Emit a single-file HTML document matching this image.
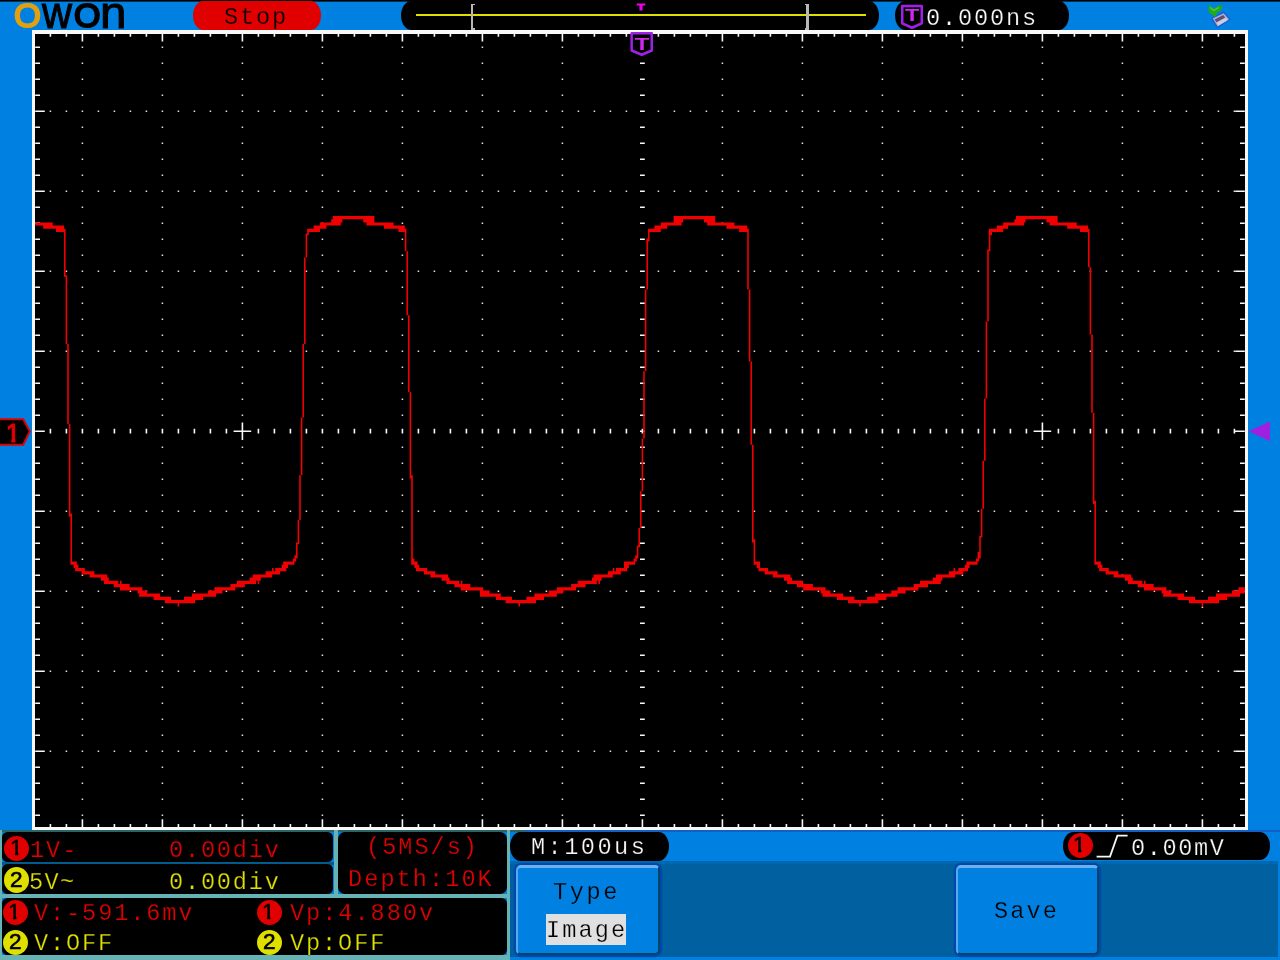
<!DOCTYPE html>
<html lang="en">
<head>
<meta charset="utf-8">
<title>OWON oscilloscope</title>
<style>
html,body{margin:0;padding:0;}
body{width:1280px;height:960px;overflow:hidden;background:#0080e0;position:relative;
 font-family:"Liberation Mono",monospace;}
.abs{position:absolute;}
.blk{position:absolute;background:#000;}
.t{position:absolute;will-change:transform;white-space:pre;line-height:1;font-family:"Liberation Mono",monospace;font-size:24px;}
.s{position:absolute;will-change:transform;white-space:pre;line-height:1;font-family:"Liberation Sans",sans-serif;}
.red{color:#e00000;-webkit-text-stroke:0.25px #000;} .yel{color:#e0e000;-webkit-text-stroke:0.25px #000;} .wht{color:#f8f8f8;-webkit-text-stroke:0.25px #000;} .bk{color:#000;}
.circ{position:absolute;width:25px;height:25px;border-radius:50%;}
.circ span{position:absolute;left:0;top:0;width:25px;text-align:center;line-height:25px;
 font-family:"Liberation Sans",sans-serif;font-size:24px;color:#000;}
.btn{position:absolute;background:#0080e0;border-radius:5px;box-sizing:border-box;
 border-top:3px solid #6cb0ec;border-left:2px solid #58a8ea;border-right:2.2px solid #004468;border-bottom:2.2px solid #004468;box-shadow:0 0 0 2.2px #0048ac;}
</style>
</head>
<body>

<div class="abs" style="left:0;top:0;width:1280px;height:2px;background:linear-gradient(#000 0 1px,#00335a 1px 2px)"></div>
<div class="abs" style="left:32px;top:30.4px;width:1216px;height:800px;background:#f8f8f8"></div>
<div class="blk" style="left:35.2px;top:33.6px;width:1209.6px;height:793.6px"></div>
<svg class="abs" style="left:0;top:0" width="1280" height="960" viewBox="0 0 800 600">
<path fill="#d8d8d8" d="M51 29h1v1h-1zM51 39h1v1h-1zM51 49h1v1h-1zM51 59h1v1h-1zM51 69h1v1h-1zM51 79h1v1h-1zM51 89h1v1h-1zM51 99h1v1h-1zM51 109h1v1h-1zM51 119h1v1h-1zM51 129h1v1h-1zM51 139h1v1h-1zM51 149h1v1h-1zM51 159h1v1h-1zM51 169h1v1h-1zM51 179h1v1h-1zM51 189h1v1h-1zM51 199h1v1h-1zM51 209h1v1h-1zM51 219h1v1h-1zM51 229h1v1h-1zM51 239h1v1h-1zM51 249h1v1h-1zM51 259h1v1h-1zM51 279h1v1h-1zM51 289h1v1h-1zM51 299h1v1h-1zM51 309h1v1h-1zM51 319h1v1h-1zM51 329h1v1h-1zM51 339h1v1h-1zM51 349h1v1h-1zM51 359h1v1h-1zM51 369h1v1h-1zM51 379h1v1h-1zM51 389h1v1h-1zM51 399h1v1h-1zM51 409h1v1h-1zM51 419h1v1h-1zM51 429h1v1h-1zM51 439h1v1h-1zM51 449h1v1h-1zM51 459h1v1h-1zM51 469h1v1h-1zM51 479h1v1h-1zM51 489h1v1h-1zM51 499h1v1h-1zM51 509h1v1h-1zM101 29h1v1h-1zM101 39h1v1h-1zM101 49h1v1h-1zM101 59h1v1h-1zM101 69h1v1h-1zM101 79h1v1h-1zM101 89h1v1h-1zM101 99h1v1h-1zM101 109h1v1h-1zM101 119h1v1h-1zM101 129h1v1h-1zM101 139h1v1h-1zM101 149h1v1h-1zM101 159h1v1h-1zM101 169h1v1h-1zM101 179h1v1h-1zM101 189h1v1h-1zM101 199h1v1h-1zM101 209h1v1h-1zM101 219h1v1h-1zM101 229h1v1h-1zM101 239h1v1h-1zM101 249h1v1h-1zM101 259h1v1h-1zM101 279h1v1h-1zM101 289h1v1h-1zM101 299h1v1h-1zM101 309h1v1h-1zM101 319h1v1h-1zM101 329h1v1h-1zM101 339h1v1h-1zM101 349h1v1h-1zM101 359h1v1h-1zM101 369h1v1h-1zM101 379h1v1h-1zM101 389h1v1h-1zM101 399h1v1h-1zM101 409h1v1h-1zM101 419h1v1h-1zM101 429h1v1h-1zM101 439h1v1h-1zM101 449h1v1h-1zM101 459h1v1h-1zM101 469h1v1h-1zM101 479h1v1h-1zM101 489h1v1h-1zM101 499h1v1h-1zM101 509h1v1h-1zM151 29h1v1h-1zM151 39h1v1h-1zM151 49h1v1h-1zM151 59h1v1h-1zM151 69h1v1h-1zM151 79h1v1h-1zM151 89h1v1h-1zM151 99h1v1h-1zM151 109h1v1h-1zM151 119h1v1h-1zM151 129h1v1h-1zM151 139h1v1h-1zM151 149h1v1h-1zM151 159h1v1h-1zM151 169h1v1h-1zM151 179h1v1h-1zM151 189h1v1h-1zM151 199h1v1h-1zM151 209h1v1h-1zM151 219h1v1h-1zM151 229h1v1h-1zM151 239h1v1h-1zM151 249h1v1h-1zM151 259h1v1h-1zM151 279h1v1h-1zM151 289h1v1h-1zM151 299h1v1h-1zM151 309h1v1h-1zM151 319h1v1h-1zM151 329h1v1h-1zM151 339h1v1h-1zM151 349h1v1h-1zM151 359h1v1h-1zM151 369h1v1h-1zM151 379h1v1h-1zM151 389h1v1h-1zM151 399h1v1h-1zM151 409h1v1h-1zM151 419h1v1h-1zM151 429h1v1h-1zM151 439h1v1h-1zM151 449h1v1h-1zM151 459h1v1h-1zM151 469h1v1h-1zM151 479h1v1h-1zM151 489h1v1h-1zM151 499h1v1h-1zM151 509h1v1h-1zM201 29h1v1h-1zM201 39h1v1h-1zM201 49h1v1h-1zM201 59h1v1h-1zM201 69h1v1h-1zM201 79h1v1h-1zM201 89h1v1h-1zM201 99h1v1h-1zM201 109h1v1h-1zM201 119h1v1h-1zM201 129h1v1h-1zM201 139h1v1h-1zM201 149h1v1h-1zM201 159h1v1h-1zM201 169h1v1h-1zM201 179h1v1h-1zM201 189h1v1h-1zM201 199h1v1h-1zM201 209h1v1h-1zM201 219h1v1h-1zM201 229h1v1h-1zM201 239h1v1h-1zM201 249h1v1h-1zM201 259h1v1h-1zM201 279h1v1h-1zM201 289h1v1h-1zM201 299h1v1h-1zM201 309h1v1h-1zM201 319h1v1h-1zM201 329h1v1h-1zM201 339h1v1h-1zM201 349h1v1h-1zM201 359h1v1h-1zM201 369h1v1h-1zM201 379h1v1h-1zM201 389h1v1h-1zM201 399h1v1h-1zM201 409h1v1h-1zM201 419h1v1h-1zM201 429h1v1h-1zM201 439h1v1h-1zM201 449h1v1h-1zM201 459h1v1h-1zM201 469h1v1h-1zM201 479h1v1h-1zM201 489h1v1h-1zM201 499h1v1h-1zM201 509h1v1h-1zM251 29h1v1h-1zM251 39h1v1h-1zM251 49h1v1h-1zM251 59h1v1h-1zM251 69h1v1h-1zM251 79h1v1h-1zM251 89h1v1h-1zM251 99h1v1h-1zM251 109h1v1h-1zM251 119h1v1h-1zM251 129h1v1h-1zM251 139h1v1h-1zM251 149h1v1h-1zM251 159h1v1h-1zM251 169h1v1h-1zM251 179h1v1h-1zM251 189h1v1h-1zM251 199h1v1h-1zM251 209h1v1h-1zM251 219h1v1h-1zM251 229h1v1h-1zM251 239h1v1h-1zM251 249h1v1h-1zM251 259h1v1h-1zM251 279h1v1h-1zM251 289h1v1h-1zM251 299h1v1h-1zM251 309h1v1h-1zM251 319h1v1h-1zM251 329h1v1h-1zM251 339h1v1h-1zM251 349h1v1h-1zM251 359h1v1h-1zM251 369h1v1h-1zM251 379h1v1h-1zM251 389h1v1h-1zM251 399h1v1h-1zM251 409h1v1h-1zM251 419h1v1h-1zM251 429h1v1h-1zM251 439h1v1h-1zM251 449h1v1h-1zM251 459h1v1h-1zM251 469h1v1h-1zM251 479h1v1h-1zM251 489h1v1h-1zM251 499h1v1h-1zM251 509h1v1h-1zM301 29h1v1h-1zM301 39h1v1h-1zM301 49h1v1h-1zM301 59h1v1h-1zM301 69h1v1h-1zM301 79h1v1h-1zM301 89h1v1h-1zM301 99h1v1h-1zM301 109h1v1h-1zM301 119h1v1h-1zM301 129h1v1h-1zM301 139h1v1h-1zM301 149h1v1h-1zM301 159h1v1h-1zM301 169h1v1h-1zM301 179h1v1h-1zM301 189h1v1h-1zM301 199h1v1h-1zM301 209h1v1h-1zM301 219h1v1h-1zM301 229h1v1h-1zM301 239h1v1h-1zM301 249h1v1h-1zM301 259h1v1h-1zM301 279h1v1h-1zM301 289h1v1h-1zM301 299h1v1h-1zM301 309h1v1h-1zM301 319h1v1h-1zM301 329h1v1h-1zM301 339h1v1h-1zM301 349h1v1h-1zM301 359h1v1h-1zM301 369h1v1h-1zM301 379h1v1h-1zM301 389h1v1h-1zM301 399h1v1h-1zM301 409h1v1h-1zM301 419h1v1h-1zM301 429h1v1h-1zM301 439h1v1h-1zM301 449h1v1h-1zM301 459h1v1h-1zM301 469h1v1h-1zM301 479h1v1h-1zM301 489h1v1h-1zM301 499h1v1h-1zM301 509h1v1h-1zM351 29h1v1h-1zM351 39h1v1h-1zM351 49h1v1h-1zM351 59h1v1h-1zM351 69h1v1h-1zM351 79h1v1h-1zM351 89h1v1h-1zM351 99h1v1h-1zM351 109h1v1h-1zM351 119h1v1h-1zM351 129h1v1h-1zM351 139h1v1h-1zM351 149h1v1h-1zM351 159h1v1h-1zM351 169h1v1h-1zM351 179h1v1h-1zM351 189h1v1h-1zM351 199h1v1h-1zM351 209h1v1h-1zM351 219h1v1h-1zM351 229h1v1h-1zM351 239h1v1h-1zM351 249h1v1h-1zM351 259h1v1h-1zM351 279h1v1h-1zM351 289h1v1h-1zM351 299h1v1h-1zM351 309h1v1h-1zM351 319h1v1h-1zM351 329h1v1h-1zM351 339h1v1h-1zM351 349h1v1h-1zM351 359h1v1h-1zM351 369h1v1h-1zM351 379h1v1h-1zM351 389h1v1h-1zM351 399h1v1h-1zM351 409h1v1h-1zM351 419h1v1h-1zM351 429h1v1h-1zM351 439h1v1h-1zM351 449h1v1h-1zM351 459h1v1h-1zM351 469h1v1h-1zM351 479h1v1h-1zM351 489h1v1h-1zM351 499h1v1h-1zM351 509h1v1h-1zM451 29h1v1h-1zM451 39h1v1h-1zM451 49h1v1h-1zM451 59h1v1h-1zM451 69h1v1h-1zM451 79h1v1h-1zM451 89h1v1h-1zM451 99h1v1h-1zM451 109h1v1h-1zM451 119h1v1h-1zM451 129h1v1h-1zM451 139h1v1h-1zM451 149h1v1h-1zM451 159h1v1h-1zM451 169h1v1h-1zM451 179h1v1h-1zM451 189h1v1h-1zM451 199h1v1h-1zM451 209h1v1h-1zM451 219h1v1h-1zM451 229h1v1h-1zM451 239h1v1h-1zM451 249h1v1h-1zM451 259h1v1h-1zM451 279h1v1h-1zM451 289h1v1h-1zM451 299h1v1h-1zM451 309h1v1h-1zM451 319h1v1h-1zM451 329h1v1h-1zM451 339h1v1h-1zM451 349h1v1h-1zM451 359h1v1h-1zM451 369h1v1h-1zM451 379h1v1h-1zM451 389h1v1h-1zM451 399h1v1h-1zM451 409h1v1h-1zM451 419h1v1h-1zM451 429h1v1h-1zM451 439h1v1h-1zM451 449h1v1h-1zM451 459h1v1h-1zM451 469h1v1h-1zM451 479h1v1h-1zM451 489h1v1h-1zM451 499h1v1h-1zM451 509h1v1h-1zM501 29h1v1h-1zM501 39h1v1h-1zM501 49h1v1h-1zM501 59h1v1h-1zM501 69h1v1h-1zM501 79h1v1h-1zM501 89h1v1h-1zM501 99h1v1h-1zM501 109h1v1h-1zM501 119h1v1h-1zM501 129h1v1h-1zM501 139h1v1h-1zM501 149h1v1h-1zM501 159h1v1h-1zM501 169h1v1h-1zM501 179h1v1h-1zM501 189h1v1h-1zM501 199h1v1h-1zM501 209h1v1h-1zM501 219h1v1h-1zM501 229h1v1h-1zM501 239h1v1h-1zM501 249h1v1h-1zM501 259h1v1h-1zM501 279h1v1h-1zM501 289h1v1h-1zM501 299h1v1h-1zM501 309h1v1h-1zM501 319h1v1h-1zM501 329h1v1h-1zM501 339h1v1h-1zM501 349h1v1h-1zM501 359h1v1h-1zM501 369h1v1h-1zM501 379h1v1h-1zM501 389h1v1h-1zM501 399h1v1h-1zM501 409h1v1h-1zM501 419h1v1h-1zM501 429h1v1h-1zM501 439h1v1h-1zM501 449h1v1h-1zM501 459h1v1h-1zM501 469h1v1h-1zM501 479h1v1h-1zM501 489h1v1h-1zM501 499h1v1h-1zM501 509h1v1h-1zM551 29h1v1h-1zM551 39h1v1h-1zM551 49h1v1h-1zM551 59h1v1h-1zM551 69h1v1h-1zM551 79h1v1h-1zM551 89h1v1h-1zM551 99h1v1h-1zM551 109h1v1h-1zM551 119h1v1h-1zM551 129h1v1h-1zM551 139h1v1h-1zM551 149h1v1h-1zM551 159h1v1h-1zM551 169h1v1h-1zM551 179h1v1h-1zM551 189h1v1h-1zM551 199h1v1h-1zM551 209h1v1h-1zM551 219h1v1h-1zM551 229h1v1h-1zM551 239h1v1h-1zM551 249h1v1h-1zM551 259h1v1h-1zM551 279h1v1h-1zM551 289h1v1h-1zM551 299h1v1h-1zM551 309h1v1h-1zM551 319h1v1h-1zM551 329h1v1h-1zM551 339h1v1h-1zM551 349h1v1h-1zM551 359h1v1h-1zM551 369h1v1h-1zM551 379h1v1h-1zM551 389h1v1h-1zM551 399h1v1h-1zM551 409h1v1h-1zM551 419h1v1h-1zM551 429h1v1h-1zM551 439h1v1h-1zM551 449h1v1h-1zM551 459h1v1h-1zM551 469h1v1h-1zM551 479h1v1h-1zM551 489h1v1h-1zM551 499h1v1h-1zM551 509h1v1h-1zM601 29h1v1h-1zM601 39h1v1h-1zM601 49h1v1h-1zM601 59h1v1h-1zM601 69h1v1h-1zM601 79h1v1h-1zM601 89h1v1h-1zM601 99h1v1h-1zM601 109h1v1h-1zM601 119h1v1h-1zM601 129h1v1h-1zM601 139h1v1h-1zM601 149h1v1h-1zM601 159h1v1h-1zM601 169h1v1h-1zM601 179h1v1h-1zM601 189h1v1h-1zM601 199h1v1h-1zM601 209h1v1h-1zM601 219h1v1h-1zM601 229h1v1h-1zM601 239h1v1h-1zM601 249h1v1h-1zM601 259h1v1h-1zM601 279h1v1h-1zM601 289h1v1h-1zM601 299h1v1h-1zM601 309h1v1h-1zM601 319h1v1h-1zM601 329h1v1h-1zM601 339h1v1h-1zM601 349h1v1h-1zM601 359h1v1h-1zM601 369h1v1h-1zM601 379h1v1h-1zM601 389h1v1h-1zM601 399h1v1h-1zM601 409h1v1h-1zM601 419h1v1h-1zM601 429h1v1h-1zM601 439h1v1h-1zM601 449h1v1h-1zM601 459h1v1h-1zM601 469h1v1h-1zM601 479h1v1h-1zM601 489h1v1h-1zM601 499h1v1h-1zM601 509h1v1h-1zM651 29h1v1h-1zM651 39h1v1h-1zM651 49h1v1h-1zM651 59h1v1h-1zM651 69h1v1h-1zM651 79h1v1h-1zM651 89h1v1h-1zM651 99h1v1h-1zM651 109h1v1h-1zM651 119h1v1h-1zM651 129h1v1h-1zM651 139h1v1h-1zM651 149h1v1h-1zM651 159h1v1h-1zM651 169h1v1h-1zM651 179h1v1h-1zM651 189h1v1h-1zM651 199h1v1h-1zM651 209h1v1h-1zM651 219h1v1h-1zM651 229h1v1h-1zM651 239h1v1h-1zM651 249h1v1h-1zM651 259h1v1h-1zM651 279h1v1h-1zM651 289h1v1h-1zM651 299h1v1h-1zM651 309h1v1h-1zM651 319h1v1h-1zM651 329h1v1h-1zM651 339h1v1h-1zM651 349h1v1h-1zM651 359h1v1h-1zM651 369h1v1h-1zM651 379h1v1h-1zM651 389h1v1h-1zM651 399h1v1h-1zM651 409h1v1h-1zM651 419h1v1h-1zM651 429h1v1h-1zM651 439h1v1h-1zM651 449h1v1h-1zM651 459h1v1h-1zM651 469h1v1h-1zM651 479h1v1h-1zM651 489h1v1h-1zM651 499h1v1h-1zM651 509h1v1h-1zM701 29h1v1h-1zM701 39h1v1h-1zM701 49h1v1h-1zM701 59h1v1h-1zM701 69h1v1h-1zM701 79h1v1h-1zM701 89h1v1h-1zM701 99h1v1h-1zM701 109h1v1h-1zM701 119h1v1h-1zM701 129h1v1h-1zM701 139h1v1h-1zM701 149h1v1h-1zM701 159h1v1h-1zM701 169h1v1h-1zM701 179h1v1h-1zM701 189h1v1h-1zM701 199h1v1h-1zM701 209h1v1h-1zM701 219h1v1h-1zM701 229h1v1h-1zM701 239h1v1h-1zM701 249h1v1h-1zM701 259h1v1h-1zM701 279h1v1h-1zM701 289h1v1h-1zM701 299h1v1h-1zM701 309h1v1h-1zM701 319h1v1h-1zM701 329h1v1h-1zM701 339h1v1h-1zM701 349h1v1h-1zM701 359h1v1h-1zM701 369h1v1h-1zM701 379h1v1h-1zM701 389h1v1h-1zM701 399h1v1h-1zM701 409h1v1h-1zM701 419h1v1h-1zM701 429h1v1h-1zM701 439h1v1h-1zM701 449h1v1h-1zM701 459h1v1h-1zM701 469h1v1h-1zM701 479h1v1h-1zM701 489h1v1h-1zM701 499h1v1h-1zM701 509h1v1h-1zM751 29h1v1h-1zM751 39h1v1h-1zM751 49h1v1h-1zM751 59h1v1h-1zM751 69h1v1h-1zM751 79h1v1h-1zM751 89h1v1h-1zM751 99h1v1h-1zM751 109h1v1h-1zM751 119h1v1h-1zM751 129h1v1h-1zM751 139h1v1h-1zM751 149h1v1h-1zM751 159h1v1h-1zM751 169h1v1h-1zM751 179h1v1h-1zM751 189h1v1h-1zM751 199h1v1h-1zM751 209h1v1h-1zM751 219h1v1h-1zM751 229h1v1h-1zM751 239h1v1h-1zM751 249h1v1h-1zM751 259h1v1h-1zM751 279h1v1h-1zM751 289h1v1h-1zM751 299h1v1h-1zM751 309h1v1h-1zM751 319h1v1h-1zM751 329h1v1h-1zM751 339h1v1h-1zM751 349h1v1h-1zM751 359h1v1h-1zM751 369h1v1h-1zM751 379h1v1h-1zM751 389h1v1h-1zM751 399h1v1h-1zM751 409h1v1h-1zM751 419h1v1h-1zM751 429h1v1h-1zM751 439h1v1h-1zM751 449h1v1h-1zM751 459h1v1h-1zM751 469h1v1h-1zM751 479h1v1h-1zM751 489h1v1h-1zM751 499h1v1h-1zM751 509h1v1h-1zM31 69h1v1h-1zM41 69h1v1h-1zM61 69h1v1h-1zM71 69h1v1h-1zM81 69h1v1h-1zM91 69h1v1h-1zM111 69h1v1h-1zM121 69h1v1h-1zM131 69h1v1h-1zM141 69h1v1h-1zM161 69h1v1h-1zM171 69h1v1h-1zM181 69h1v1h-1zM191 69h1v1h-1zM211 69h1v1h-1zM221 69h1v1h-1zM231 69h1v1h-1zM241 69h1v1h-1zM261 69h1v1h-1zM271 69h1v1h-1zM281 69h1v1h-1zM291 69h1v1h-1zM311 69h1v1h-1zM321 69h1v1h-1zM331 69h1v1h-1zM341 69h1v1h-1zM361 69h1v1h-1zM371 69h1v1h-1zM381 69h1v1h-1zM391 69h1v1h-1zM411 69h1v1h-1zM421 69h1v1h-1zM431 69h1v1h-1zM441 69h1v1h-1zM461 69h1v1h-1zM471 69h1v1h-1zM481 69h1v1h-1zM491 69h1v1h-1zM511 69h1v1h-1zM521 69h1v1h-1zM531 69h1v1h-1zM541 69h1v1h-1zM561 69h1v1h-1zM571 69h1v1h-1zM581 69h1v1h-1zM591 69h1v1h-1zM611 69h1v1h-1zM621 69h1v1h-1zM631 69h1v1h-1zM641 69h1v1h-1zM661 69h1v1h-1zM671 69h1v1h-1zM681 69h1v1h-1zM691 69h1v1h-1zM711 69h1v1h-1zM721 69h1v1h-1zM731 69h1v1h-1zM741 69h1v1h-1zM761 69h1v1h-1zM771 69h1v1h-1zM31 119h1v1h-1zM41 119h1v1h-1zM61 119h1v1h-1zM71 119h1v1h-1zM81 119h1v1h-1zM91 119h1v1h-1zM111 119h1v1h-1zM121 119h1v1h-1zM131 119h1v1h-1zM141 119h1v1h-1zM161 119h1v1h-1zM171 119h1v1h-1zM181 119h1v1h-1zM191 119h1v1h-1zM211 119h1v1h-1zM221 119h1v1h-1zM231 119h1v1h-1zM241 119h1v1h-1zM261 119h1v1h-1zM271 119h1v1h-1zM281 119h1v1h-1zM291 119h1v1h-1zM311 119h1v1h-1zM321 119h1v1h-1zM331 119h1v1h-1zM341 119h1v1h-1zM361 119h1v1h-1zM371 119h1v1h-1zM381 119h1v1h-1zM391 119h1v1h-1zM411 119h1v1h-1zM421 119h1v1h-1zM431 119h1v1h-1zM441 119h1v1h-1zM461 119h1v1h-1zM471 119h1v1h-1zM481 119h1v1h-1zM491 119h1v1h-1zM511 119h1v1h-1zM521 119h1v1h-1zM531 119h1v1h-1zM541 119h1v1h-1zM561 119h1v1h-1zM571 119h1v1h-1zM581 119h1v1h-1zM591 119h1v1h-1zM611 119h1v1h-1zM621 119h1v1h-1zM631 119h1v1h-1zM641 119h1v1h-1zM661 119h1v1h-1zM671 119h1v1h-1zM681 119h1v1h-1zM691 119h1v1h-1zM711 119h1v1h-1zM721 119h1v1h-1zM731 119h1v1h-1zM741 119h1v1h-1zM761 119h1v1h-1zM771 119h1v1h-1zM31 169h1v1h-1zM41 169h1v1h-1zM61 169h1v1h-1zM71 169h1v1h-1zM81 169h1v1h-1zM91 169h1v1h-1zM111 169h1v1h-1zM121 169h1v1h-1zM131 169h1v1h-1zM141 169h1v1h-1zM161 169h1v1h-1zM171 169h1v1h-1zM181 169h1v1h-1zM191 169h1v1h-1zM211 169h1v1h-1zM221 169h1v1h-1zM231 169h1v1h-1zM241 169h1v1h-1zM261 169h1v1h-1zM271 169h1v1h-1zM281 169h1v1h-1zM291 169h1v1h-1zM311 169h1v1h-1zM321 169h1v1h-1zM331 169h1v1h-1zM341 169h1v1h-1zM361 169h1v1h-1zM371 169h1v1h-1zM381 169h1v1h-1zM391 169h1v1h-1zM411 169h1v1h-1zM421 169h1v1h-1zM431 169h1v1h-1zM441 169h1v1h-1zM461 169h1v1h-1zM471 169h1v1h-1zM481 169h1v1h-1zM491 169h1v1h-1zM511 169h1v1h-1zM521 169h1v1h-1zM531 169h1v1h-1zM541 169h1v1h-1zM561 169h1v1h-1zM571 169h1v1h-1zM581 169h1v1h-1zM591 169h1v1h-1zM611 169h1v1h-1zM621 169h1v1h-1zM631 169h1v1h-1zM641 169h1v1h-1zM661 169h1v1h-1zM671 169h1v1h-1zM681 169h1v1h-1zM691 169h1v1h-1zM711 169h1v1h-1zM721 169h1v1h-1zM731 169h1v1h-1zM741 169h1v1h-1zM761 169h1v1h-1zM771 169h1v1h-1zM31 219h1v1h-1zM41 219h1v1h-1zM61 219h1v1h-1zM71 219h1v1h-1zM81 219h1v1h-1zM91 219h1v1h-1zM111 219h1v1h-1zM121 219h1v1h-1zM131 219h1v1h-1zM141 219h1v1h-1zM161 219h1v1h-1zM171 219h1v1h-1zM181 219h1v1h-1zM191 219h1v1h-1zM211 219h1v1h-1zM221 219h1v1h-1zM231 219h1v1h-1zM241 219h1v1h-1zM261 219h1v1h-1zM271 219h1v1h-1zM281 219h1v1h-1zM291 219h1v1h-1zM311 219h1v1h-1zM321 219h1v1h-1zM331 219h1v1h-1zM341 219h1v1h-1zM361 219h1v1h-1zM371 219h1v1h-1zM381 219h1v1h-1zM391 219h1v1h-1zM411 219h1v1h-1zM421 219h1v1h-1zM431 219h1v1h-1zM441 219h1v1h-1zM461 219h1v1h-1zM471 219h1v1h-1zM481 219h1v1h-1zM491 219h1v1h-1zM511 219h1v1h-1zM521 219h1v1h-1zM531 219h1v1h-1zM541 219h1v1h-1zM561 219h1v1h-1zM571 219h1v1h-1zM581 219h1v1h-1zM591 219h1v1h-1zM611 219h1v1h-1zM621 219h1v1h-1zM631 219h1v1h-1zM641 219h1v1h-1zM661 219h1v1h-1zM671 219h1v1h-1zM681 219h1v1h-1zM691 219h1v1h-1zM711 219h1v1h-1zM721 219h1v1h-1zM731 219h1v1h-1zM741 219h1v1h-1zM761 219h1v1h-1zM771 219h1v1h-1zM31 319h1v1h-1zM41 319h1v1h-1zM61 319h1v1h-1zM71 319h1v1h-1zM81 319h1v1h-1zM91 319h1v1h-1zM111 319h1v1h-1zM121 319h1v1h-1zM131 319h1v1h-1zM141 319h1v1h-1zM161 319h1v1h-1zM171 319h1v1h-1zM181 319h1v1h-1zM191 319h1v1h-1zM211 319h1v1h-1zM221 319h1v1h-1zM231 319h1v1h-1zM241 319h1v1h-1zM261 319h1v1h-1zM271 319h1v1h-1zM281 319h1v1h-1zM291 319h1v1h-1zM311 319h1v1h-1zM321 319h1v1h-1zM331 319h1v1h-1zM341 319h1v1h-1zM361 319h1v1h-1zM371 319h1v1h-1zM381 319h1v1h-1zM391 319h1v1h-1zM411 319h1v1h-1zM421 319h1v1h-1zM431 319h1v1h-1zM441 319h1v1h-1zM461 319h1v1h-1zM471 319h1v1h-1zM481 319h1v1h-1zM491 319h1v1h-1zM511 319h1v1h-1zM521 319h1v1h-1zM531 319h1v1h-1zM541 319h1v1h-1zM561 319h1v1h-1zM571 319h1v1h-1zM581 319h1v1h-1zM591 319h1v1h-1zM611 319h1v1h-1zM621 319h1v1h-1zM631 319h1v1h-1zM641 319h1v1h-1zM661 319h1v1h-1zM671 319h1v1h-1zM681 319h1v1h-1zM691 319h1v1h-1zM711 319h1v1h-1zM721 319h1v1h-1zM731 319h1v1h-1zM741 319h1v1h-1zM761 319h1v1h-1zM771 319h1v1h-1zM31 369h1v1h-1zM41 369h1v1h-1zM61 369h1v1h-1zM71 369h1v1h-1zM81 369h1v1h-1zM91 369h1v1h-1zM111 369h1v1h-1zM121 369h1v1h-1zM131 369h1v1h-1zM141 369h1v1h-1zM161 369h1v1h-1zM171 369h1v1h-1zM181 369h1v1h-1zM191 369h1v1h-1zM211 369h1v1h-1zM221 369h1v1h-1zM231 369h1v1h-1zM241 369h1v1h-1zM261 369h1v1h-1zM271 369h1v1h-1zM281 369h1v1h-1zM291 369h1v1h-1zM311 369h1v1h-1zM321 369h1v1h-1zM331 369h1v1h-1zM341 369h1v1h-1zM361 369h1v1h-1zM371 369h1v1h-1zM381 369h1v1h-1zM391 369h1v1h-1zM411 369h1v1h-1zM421 369h1v1h-1zM431 369h1v1h-1zM441 369h1v1h-1zM461 369h1v1h-1zM471 369h1v1h-1zM481 369h1v1h-1zM491 369h1v1h-1zM511 369h1v1h-1zM521 369h1v1h-1zM531 369h1v1h-1zM541 369h1v1h-1zM561 369h1v1h-1zM571 369h1v1h-1zM581 369h1v1h-1zM591 369h1v1h-1zM611 369h1v1h-1zM621 369h1v1h-1zM631 369h1v1h-1zM641 369h1v1h-1zM661 369h1v1h-1zM671 369h1v1h-1zM681 369h1v1h-1zM691 369h1v1h-1zM711 369h1v1h-1zM721 369h1v1h-1zM731 369h1v1h-1zM741 369h1v1h-1zM761 369h1v1h-1zM771 369h1v1h-1zM31 419h1v1h-1zM41 419h1v1h-1zM61 419h1v1h-1zM71 419h1v1h-1zM81 419h1v1h-1zM91 419h1v1h-1zM111 419h1v1h-1zM121 419h1v1h-1zM131 419h1v1h-1zM141 419h1v1h-1zM161 419h1v1h-1zM171 419h1v1h-1zM181 419h1v1h-1zM191 419h1v1h-1zM211 419h1v1h-1zM221 419h1v1h-1zM231 419h1v1h-1zM241 419h1v1h-1zM261 419h1v1h-1zM271 419h1v1h-1zM281 419h1v1h-1zM291 419h1v1h-1zM311 419h1v1h-1zM321 419h1v1h-1zM331 419h1v1h-1zM341 419h1v1h-1zM361 419h1v1h-1zM371 419h1v1h-1zM381 419h1v1h-1zM391 419h1v1h-1zM411 419h1v1h-1zM421 419h1v1h-1zM431 419h1v1h-1zM441 419h1v1h-1zM461 419h1v1h-1zM471 419h1v1h-1zM481 419h1v1h-1zM491 419h1v1h-1zM511 419h1v1h-1zM521 419h1v1h-1zM531 419h1v1h-1zM541 419h1v1h-1zM561 419h1v1h-1zM571 419h1v1h-1zM581 419h1v1h-1zM591 419h1v1h-1zM611 419h1v1h-1zM621 419h1v1h-1zM631 419h1v1h-1zM641 419h1v1h-1zM661 419h1v1h-1zM671 419h1v1h-1zM681 419h1v1h-1zM691 419h1v1h-1zM711 419h1v1h-1zM721 419h1v1h-1zM731 419h1v1h-1zM741 419h1v1h-1zM761 419h1v1h-1zM771 419h1v1h-1zM31 469h1v1h-1zM41 469h1v1h-1zM61 469h1v1h-1zM71 469h1v1h-1zM81 469h1v1h-1zM91 469h1v1h-1zM111 469h1v1h-1zM121 469h1v1h-1zM131 469h1v1h-1zM141 469h1v1h-1zM161 469h1v1h-1zM171 469h1v1h-1zM181 469h1v1h-1zM191 469h1v1h-1zM211 469h1v1h-1zM221 469h1v1h-1zM231 469h1v1h-1zM241 469h1v1h-1zM261 469h1v1h-1zM271 469h1v1h-1zM281 469h1v1h-1zM291 469h1v1h-1zM311 469h1v1h-1zM321 469h1v1h-1zM331 469h1v1h-1zM341 469h1v1h-1zM361 469h1v1h-1zM371 469h1v1h-1zM381 469h1v1h-1zM391 469h1v1h-1zM411 469h1v1h-1zM421 469h1v1h-1zM431 469h1v1h-1zM441 469h1v1h-1zM461 469h1v1h-1zM471 469h1v1h-1zM481 469h1v1h-1zM491 469h1v1h-1zM511 469h1v1h-1zM521 469h1v1h-1zM531 469h1v1h-1zM541 469h1v1h-1zM561 469h1v1h-1zM571 469h1v1h-1zM581 469h1v1h-1zM591 469h1v1h-1zM611 469h1v1h-1zM621 469h1v1h-1zM631 469h1v1h-1zM641 469h1v1h-1zM661 469h1v1h-1zM671 469h1v1h-1zM681 469h1v1h-1zM691 469h1v1h-1zM711 469h1v1h-1zM721 469h1v1h-1zM731 469h1v1h-1zM741 469h1v1h-1zM761 469h1v1h-1zM771 469h1v1h-1z"/>
<path fill="#f8f8f8" d="M31 268h1v3h-1zM41 268h1v3h-1zM51 268h1v3h-1zM61 268h1v3h-1zM71 268h1v3h-1zM81 268h1v3h-1zM91 268h1v3h-1zM101 268h1v3h-1zM111 268h1v3h-1zM121 268h1v3h-1zM131 268h1v3h-1zM141 268h1v3h-1zM151 268h1v3h-1zM161 268h1v3h-1zM171 268h1v3h-1zM181 268h1v3h-1zM191 268h1v3h-1zM201 268h1v3h-1zM211 268h1v3h-1zM221 268h1v3h-1zM231 268h1v3h-1zM241 268h1v3h-1zM251 268h1v3h-1zM261 268h1v3h-1zM271 268h1v3h-1zM281 268h1v3h-1zM291 268h1v3h-1zM301 268h1v3h-1zM311 268h1v3h-1zM321 268h1v3h-1zM331 268h1v3h-1zM341 268h1v3h-1zM351 268h1v3h-1zM361 268h1v3h-1zM371 268h1v3h-1zM381 268h1v3h-1zM391 268h1v3h-1zM401 268h1v3h-1zM411 268h1v3h-1zM421 268h1v3h-1zM431 268h1v3h-1zM441 268h1v3h-1zM451 268h1v3h-1zM461 268h1v3h-1zM471 268h1v3h-1zM481 268h1v3h-1zM491 268h1v3h-1zM501 268h1v3h-1zM511 268h1v3h-1zM521 268h1v3h-1zM531 268h1v3h-1zM541 268h1v3h-1zM551 268h1v3h-1zM561 268h1v3h-1zM571 268h1v3h-1zM581 268h1v3h-1zM591 268h1v3h-1zM601 268h1v3h-1zM611 268h1v3h-1zM621 268h1v3h-1zM631 268h1v3h-1zM641 268h1v3h-1zM651 268h1v3h-1zM661 268h1v3h-1zM671 268h1v3h-1zM681 268h1v3h-1zM691 268h1v3h-1zM701 268h1v3h-1zM711 268h1v3h-1zM721 268h1v3h-1zM731 268h1v3h-1zM741 268h1v3h-1zM751 268h1v3h-1zM761 268h1v3h-1zM771 268h1v3h-1zM400 29h3v1h-3zM400 39h3v1h-3zM400 49h3v1h-3zM400 59h3v1h-3zM400 69h3v1h-3zM400 79h3v1h-3zM400 89h3v1h-3zM400 99h3v1h-3zM400 109h3v1h-3zM400 119h3v1h-3zM400 129h3v1h-3zM400 139h3v1h-3zM400 149h3v1h-3zM400 159h3v1h-3zM400 169h3v1h-3zM400 179h3v1h-3zM400 189h3v1h-3zM400 199h3v1h-3zM400 209h3v1h-3zM400 219h3v1h-3zM400 229h3v1h-3zM400 239h3v1h-3zM400 249h3v1h-3zM400 259h3v1h-3zM400 269h3v1h-3zM400 279h3v1h-3zM400 289h3v1h-3zM400 299h3v1h-3zM400 309h3v1h-3zM400 319h3v1h-3zM400 329h3v1h-3zM400 339h3v1h-3zM400 349h3v1h-3zM400 359h3v1h-3zM400 369h3v1h-3zM400 379h3v1h-3zM400 389h3v1h-3zM400 399h3v1h-3zM400 409h3v1h-3zM400 419h3v1h-3zM400 429h3v1h-3zM400 439h3v1h-3zM400 449h3v1h-3zM400 459h3v1h-3zM400 469h3v1h-3zM400 479h3v1h-3zM400 489h3v1h-3zM400 499h3v1h-3zM400 509h3v1h-3zM151 264h1v11h-1zM146 269h11v1h-11zM651 264h1v11h-1zM646 269h11v1h-11zM31 21h1v2h-1zM31 515h1v2h-1zM41 21h1v2h-1zM41 515h1v2h-1zM51 21h1v5h-1zM51 512h1v5h-1zM61 21h1v2h-1zM61 515h1v2h-1zM71 21h1v2h-1zM71 515h1v2h-1zM81 21h1v2h-1zM81 515h1v2h-1zM91 21h1v2h-1zM91 515h1v2h-1zM101 21h1v5h-1zM101 512h1v5h-1zM111 21h1v2h-1zM111 515h1v2h-1zM121 21h1v2h-1zM121 515h1v2h-1zM131 21h1v2h-1zM131 515h1v2h-1zM141 21h1v2h-1zM141 515h1v2h-1zM151 21h1v5h-1zM151 512h1v5h-1zM161 21h1v2h-1zM161 515h1v2h-1zM171 21h1v2h-1zM171 515h1v2h-1zM181 21h1v2h-1zM181 515h1v2h-1zM191 21h1v2h-1zM191 515h1v2h-1zM201 21h1v5h-1zM201 512h1v5h-1zM211 21h1v2h-1zM211 515h1v2h-1zM221 21h1v2h-1zM221 515h1v2h-1zM231 21h1v2h-1zM231 515h1v2h-1zM241 21h1v2h-1zM241 515h1v2h-1zM251 21h1v5h-1zM251 512h1v5h-1zM261 21h1v2h-1zM261 515h1v2h-1zM271 21h1v2h-1zM271 515h1v2h-1zM281 21h1v2h-1zM281 515h1v2h-1zM291 21h1v2h-1zM291 515h1v2h-1zM301 21h1v5h-1zM301 512h1v5h-1zM311 21h1v2h-1zM311 515h1v2h-1zM321 21h1v2h-1zM321 515h1v2h-1zM331 21h1v2h-1zM331 515h1v2h-1zM341 21h1v2h-1zM341 515h1v2h-1zM351 21h1v5h-1zM351 512h1v5h-1zM361 21h1v2h-1zM361 515h1v2h-1zM371 21h1v2h-1zM371 515h1v2h-1zM381 21h1v2h-1zM381 515h1v2h-1zM391 21h1v2h-1zM391 515h1v2h-1zM401 21h1v5h-1zM401 512h1v5h-1zM411 21h1v2h-1zM411 515h1v2h-1zM421 21h1v2h-1zM421 515h1v2h-1zM431 21h1v2h-1zM431 515h1v2h-1zM441 21h1v2h-1zM441 515h1v2h-1zM451 21h1v5h-1zM451 512h1v5h-1zM461 21h1v2h-1zM461 515h1v2h-1zM471 21h1v2h-1zM471 515h1v2h-1zM481 21h1v2h-1zM481 515h1v2h-1zM491 21h1v2h-1zM491 515h1v2h-1zM501 21h1v5h-1zM501 512h1v5h-1zM511 21h1v2h-1zM511 515h1v2h-1zM521 21h1v2h-1zM521 515h1v2h-1zM531 21h1v2h-1zM531 515h1v2h-1zM541 21h1v2h-1zM541 515h1v2h-1zM551 21h1v5h-1zM551 512h1v5h-1zM561 21h1v2h-1zM561 515h1v2h-1zM571 21h1v2h-1zM571 515h1v2h-1zM581 21h1v2h-1zM581 515h1v2h-1zM591 21h1v2h-1zM591 515h1v2h-1zM601 21h1v5h-1zM601 512h1v5h-1zM611 21h1v2h-1zM611 515h1v2h-1zM621 21h1v2h-1zM621 515h1v2h-1zM631 21h1v2h-1zM631 515h1v2h-1zM641 21h1v2h-1zM641 515h1v2h-1zM651 21h1v5h-1zM651 512h1v5h-1zM661 21h1v2h-1zM661 515h1v2h-1zM671 21h1v2h-1zM671 515h1v2h-1zM681 21h1v2h-1zM681 515h1v2h-1zM691 21h1v2h-1zM691 515h1v2h-1zM701 21h1v5h-1zM701 512h1v5h-1zM711 21h1v2h-1zM711 515h1v2h-1zM721 21h1v2h-1zM721 515h1v2h-1zM731 21h1v2h-1zM731 515h1v2h-1zM741 21h1v2h-1zM741 515h1v2h-1zM751 21h1v5h-1zM751 512h1v5h-1zM761 21h1v2h-1zM761 515h1v2h-1zM771 21h1v2h-1zM771 515h1v2h-1zM22 29h3v1h-3zM775 29h3v1h-3zM22 39h3v1h-3zM775 39h3v1h-3zM22 49h3v1h-3zM775 49h3v1h-3zM22 59h3v1h-3zM775 59h3v1h-3zM22 69h6v1h-6zM772 69h6v1h-6zM22 79h3v1h-3zM775 79h3v1h-3zM22 89h3v1h-3zM775 89h3v1h-3zM22 99h3v1h-3zM775 99h3v1h-3zM22 109h3v1h-3zM775 109h3v1h-3zM22 119h6v1h-6zM772 119h6v1h-6zM22 129h3v1h-3zM775 129h3v1h-3zM22 139h3v1h-3zM775 139h3v1h-3zM22 149h3v1h-3zM775 149h3v1h-3zM22 159h3v1h-3zM775 159h3v1h-3zM22 169h6v1h-6zM772 169h6v1h-6zM22 179h3v1h-3zM775 179h3v1h-3zM22 189h3v1h-3zM775 189h3v1h-3zM22 199h3v1h-3zM775 199h3v1h-3zM22 209h3v1h-3zM775 209h3v1h-3zM22 219h6v1h-6zM772 219h6v1h-6zM22 229h3v1h-3zM775 229h3v1h-3zM22 239h3v1h-3zM775 239h3v1h-3zM22 249h3v1h-3zM775 249h3v1h-3zM22 259h3v1h-3zM775 259h3v1h-3zM22 269h6v1h-6zM772 269h6v1h-6zM22 279h3v1h-3zM775 279h3v1h-3zM22 289h3v1h-3zM775 289h3v1h-3zM22 299h3v1h-3zM775 299h3v1h-3zM22 309h3v1h-3zM775 309h3v1h-3zM22 319h6v1h-6zM772 319h6v1h-6zM22 329h3v1h-3zM775 329h3v1h-3zM22 339h3v1h-3zM775 339h3v1h-3zM22 349h3v1h-3zM775 349h3v1h-3zM22 359h3v1h-3zM775 359h3v1h-3zM22 369h6v1h-6zM772 369h6v1h-6zM22 379h3v1h-3zM775 379h3v1h-3zM22 389h3v1h-3zM775 389h3v1h-3zM22 399h3v1h-3zM775 399h3v1h-3zM22 409h3v1h-3zM775 409h3v1h-3zM22 419h6v1h-6zM772 419h6v1h-6zM22 429h3v1h-3zM775 429h3v1h-3zM22 439h3v1h-3zM775 439h3v1h-3zM22 449h3v1h-3zM775 449h3v1h-3zM22 459h3v1h-3zM775 459h3v1h-3zM22 469h6v1h-6zM772 469h6v1h-6zM22 479h3v1h-3zM775 479h3v1h-3zM22 489h3v1h-3zM775 489h3v1h-3zM22 499h3v1h-3zM775 499h3v1h-3zM22 509h3v1h-3zM775 509h3v1h-3z"/>
<path fill="#f00000" d="M22 139v2h1v-2zM23 139v2h1v-2zM24 139v2h1v-2zM25 139v2h1v-2zM26 139v2h1v-2zM27 139v4h1v-4zM28 139v4h1v-4zM29 139v4h1v-4zM30 139v4h1v-4zM31 139v4h1v-4zM32 139v4h1v-4zM33 141v2h1v-2zM34 141v2h1v-2zM35 141v4h1v-4zM36 141v4h1v-4zM37 141v4h1v-4zM38 141v4h1v-4zM39 141v4h1v-4zM40 143v30h1v-30zM41 172v43h1v-43zM42 215v50h1v-50zM43 265v58h1v-58zM44 321v32h1v-32zM45 351v2h1v-2zM46 351v4h1v-4zM47 351v6h1v-6zM48 353v4h1v-4zM49 355v2h1v-2zM50 355v2h1v-2zM51 355v4h1v-4zM52 355v4h1v-4zM53 357v2h1v-2zM54 357v2h1v-2zM55 357v2h1v-2zM56 357v4h1v-4zM57 357v4h1v-4zM58 357v4h1v-4zM59 359v2h1v-2zM60 359v2h1v-2zM61 359v2h1v-2zM62 359v2h1v-2zM63 359v4h1v-4zM64 359v4h1v-4zM65 359v6h1v-6zM66 359v6h1v-6zM67 361v4h1v-4zM68 363v2h1v-2zM69 363v2h1v-2zM70 363v2h1v-2zM71 363v4h1v-4zM72 363v4h1v-4zM73 363v4h1v-4zM74 365v2h1v-2zM75 363v6h1v-6zM76 365v4h1v-4zM77 365v4h1v-4zM78 365v4h1v-4zM79 365v4h1v-4zM80 365v4h1v-4zM81 367v2h1v-2zM82 367v2h1v-2zM83 367v2h1v-2zM84 367v2h1v-2zM85 367v2h1v-2zM86 367v4h1v-4zM87 367v6h1v-6zM88 367v6h1v-6zM89 369v4h1v-4zM90 369v4h1v-4zM91 369v4h1v-4zM92 371v2h1v-2zM93 371v2h1v-2zM94 371v2h1v-2zM95 371v2h1v-2zM96 371v4h1v-4zM97 371v4h1v-4zM98 371v4h1v-4zM99 371v4h1v-4zM100 373v2h1v-2zM101 373v2h1v-2zM102 373v2h1v-2zM103 373v4h1v-4zM104 373v4h1v-4zM105 373v4h1v-4zM106 373v4h1v-4zM107 375v2h1v-2zM108 375v2h1v-2zM109 375v2h1v-2zM110 375v2h1v-2zM111 375v4h1v-4zM112 375v2h1v-2zM113 375v2h1v-2zM114 375v2h1v-2zM115 373v4h1v-4zM116 373v4h1v-4zM117 373v4h1v-4zM118 373v4h1v-4zM119 373v4h1v-4zM120 371v6h1v-6zM121 371v6h1v-6zM122 371v4h1v-4zM123 371v4h1v-4zM124 371v4h1v-4zM125 371v4h1v-4zM126 371v4h1v-4zM127 371v2h1v-2zM128 371v2h1v-2zM129 371v2h1v-2zM130 369v4h1v-4zM131 369v4h1v-4zM132 369v4h1v-4zM133 369v4h1v-4zM134 367v6h1v-6zM135 367v4h1v-4zM136 367v4h1v-4zM137 367v4h1v-4zM138 367v4h1v-4zM139 367v2h1v-2zM140 367v2h1v-2zM141 367v2h1v-2zM142 367v2h1v-2zM143 367v2h1v-2zM144 365v4h1v-4zM145 365v4h1v-4zM146 365v4h1v-4zM147 365v2h1v-2zM148 363v4h1v-4zM149 363v4h1v-4zM150 363v4h1v-4zM151 363v4h1v-4zM152 363v4h1v-4zM153 363v2h1v-2zM154 363v2h1v-2zM155 363v2h1v-2zM156 361v4h1v-4zM157 361v4h1v-4zM158 359v6h1v-6zM159 359v6h1v-6zM160 359v4h1v-4zM161 359v6h1v-6zM162 359v4h1v-4zM163 359v2h1v-2zM164 359v2h1v-2zM165 359v2h1v-2zM166 357v4h1v-4zM167 357v4h1v-4zM168 357v4h1v-4zM169 357v4h1v-4zM170 355v4h1v-4zM171 357v2h1v-2zM172 355v4h1v-4zM173 355v4h1v-4zM174 355v4h1v-4zM175 355v2h1v-2zM176 353v4h1v-4zM177 351v6h1v-6zM178 351v6h1v-6zM179 351v4h1v-4zM180 351v2h1v-2zM181 351v2h1v-2zM182 351v2h1v-2zM183 349v4h1v-4zM184 347v4h1v-4zM185 339v10h1v-10zM186 325v15h1v-15zM187 297v28h1v-28zM188 261v36h1v-36zM189 215v46h1v-46zM190 161v54h1v-54zM191 146v15h1v-15zM192 143v4h1v-4zM193 143v2h1v-2zM194 143v2h1v-2zM195 143v2h1v-2zM196 141v4h1v-4zM197 141v4h1v-4zM198 141v4h1v-4zM199 141v4h1v-4zM200 139v4h1v-4zM201 139v4h1v-4zM202 139v4h1v-4zM203 139v4h1v-4zM204 139v2h1v-2zM205 139v2h1v-2zM206 139v2h1v-2zM207 137v4h1v-4zM208 135v6h1v-6zM209 135v6h1v-6zM210 135v6h1v-6zM211 135v6h1v-6zM212 135v6h1v-6zM213 135v4h1v-4zM214 135v2h1v-2zM215 135v2h1v-2zM216 135v2h1v-2zM217 135v2h1v-2zM218 135v2h1v-2zM219 135v2h1v-2zM220 135v2h1v-2zM221 135v2h1v-2zM222 135v2h1v-2zM223 135v2h1v-2zM224 135v2h1v-2zM225 135v2h1v-2zM226 135v2h1v-2zM227 135v4h1v-4zM228 135v4h1v-4zM229 135v6h1v-6zM230 135v6h1v-6zM231 135v6h1v-6zM232 135v6h1v-6zM233 135v6h1v-6zM234 139v2h1v-2zM235 139v2h1v-2zM236 139v2h1v-2zM237 139v2h1v-2zM238 139v2h1v-2zM239 139v2h1v-2zM240 139v4h1v-4zM241 139v4h1v-4zM242 139v4h1v-4zM243 139v4h1v-4zM244 139v4h1v-4zM245 139v4h1v-4zM246 141v2h1v-2zM247 141v2h1v-2zM248 141v2h1v-2zM249 141v4h1v-4zM250 141v4h1v-4zM251 141v4h1v-4zM252 141v4h1v-4zM253 143v14h1v-14zM254 157v40h1v-40zM255 197v48h1v-48zM256 245v54h1v-54zM257 297v56h1v-56zM258 349v4h1v-4zM259 351v4h1v-4zM260 351v6h1v-6zM261 353v4h1v-4zM262 355v2h1v-2zM263 355v2h1v-2zM264 355v2h1v-2zM265 355v4h1v-4zM266 355v4h1v-4zM267 357v2h1v-2zM268 357v2h1v-2zM269 357v4h1v-4zM270 357v4h1v-4zM271 357v4h1v-4zM272 359v2h1v-2zM273 359v2h1v-2zM274 359v2h1v-2zM275 359v2h1v-2zM276 359v4h1v-4zM277 359v4h1v-4zM278 359v4h1v-4zM279 359v6h1v-6zM280 361v4h1v-4zM281 363v2h1v-2zM282 363v2h1v-2zM283 363v2h1v-2zM284 363v4h1v-4zM285 363v4h1v-4zM286 363v4h1v-4zM287 365v2h1v-2zM288 363v6h1v-6zM289 365v4h1v-4zM290 365v4h1v-4zM291 365v4h1v-4zM292 365v4h1v-4zM293 365v4h1v-4zM294 367v2h1v-2zM295 367v2h1v-2zM296 367v2h1v-2zM297 367v2h1v-2zM298 367v2h1v-2zM299 367v2h1v-2zM300 367v6h1v-6zM301 367v6h1v-6zM302 369v4h1v-4zM303 369v4h1v-4zM304 369v4h1v-4zM305 369v4h1v-4zM306 371v2h1v-2zM307 371v2h1v-2zM308 371v2h1v-2zM309 371v2h1v-2zM310 371v4h1v-4zM311 371v4h1v-4zM312 371v4h1v-4zM313 373v2h1v-2zM314 373v2h1v-2zM315 373v2h1v-2zM316 373v4h1v-4zM317 373v4h1v-4zM318 373v4h1v-4zM319 373v4h1v-4zM320 375v2h1v-2zM321 375v2h1v-2zM322 375v2h1v-2zM323 375v2h1v-2zM324 375v4h1v-4zM325 375v2h1v-2zM326 375v2h1v-2zM327 375v2h1v-2zM328 375v2h1v-2zM329 373v4h1v-4zM330 373v4h1v-4zM331 373v4h1v-4zM332 373v4h1v-4zM333 373v4h1v-4zM334 371v6h1v-6zM335 371v4h1v-4zM336 371v4h1v-4zM337 371v4h1v-4zM338 371v4h1v-4zM339 371v4h1v-4zM340 371v2h1v-2zM341 371v2h1v-2zM342 371v2h1v-2zM343 369v4h1v-4zM344 369v4h1v-4zM345 369v4h1v-4zM346 369v4h1v-4zM347 369v4h1v-4zM348 367v4h1v-4zM349 367v4h1v-4zM350 367v4h1v-4zM351 367v4h1v-4zM352 367v2h1v-2zM353 367v2h1v-2zM354 367v2h1v-2zM355 367v2h1v-2zM356 367v2h1v-2zM357 365v4h1v-4zM358 365v4h1v-4zM359 365v4h1v-4zM360 365v2h1v-2zM361 363v4h1v-4zM362 363v4h1v-4zM363 363v4h1v-4zM364 363v4h1v-4zM365 363v4h1v-4zM366 363v2h1v-2zM367 363v2h1v-2zM368 363v2h1v-2zM369 363v2h1v-2zM370 361v4h1v-4zM371 359v6h1v-6zM372 359v6h1v-6zM373 359v4h1v-4zM374 359v6h1v-6zM375 359v4h1v-4zM376 359v2h1v-2zM377 359v2h1v-2zM378 359v2h1v-2zM379 359v2h1v-2zM380 357v4h1v-4zM381 357v4h1v-4zM382 357v4h1v-4zM383 355v4h1v-4zM384 357v2h1v-2zM385 355v4h1v-4zM386 355v4h1v-4zM387 355v4h1v-4zM388 355v2h1v-2zM389 355v2h1v-2zM390 351v6h1v-6zM391 351v6h1v-6zM392 351v4h1v-4zM393 351v2h1v-2zM394 351v2h1v-2zM395 351v2h1v-2zM396 349v4h1v-4zM397 347v4h1v-4zM398 341v8h1v-8zM399 330v12h1v-12zM400 307v23h1v-23zM401 274v33h1v-33zM402 232v42h1v-42zM403 181v51h1v-51zM404 149v32h1v-32zM405 143v8h1v-8zM406 143v2h1v-2zM407 143v2h1v-2zM408 143v2h1v-2zM409 141v4h1v-4zM410 141v4h1v-4zM411 141v4h1v-4zM412 141v4h1v-4zM413 139v4h1v-4zM414 139v4h1v-4zM415 139v4h1v-4zM416 139v4h1v-4zM417 139v2h1v-2zM418 139v2h1v-2zM419 139v2h1v-2zM420 139v2h1v-2zM421 135v6h1v-6zM422 135v6h1v-6zM423 135v6h1v-6zM424 135v6h1v-6zM425 135v6h1v-6zM426 135v4h1v-4zM427 135v2h1v-2zM428 135v2h1v-2zM429 135v2h1v-2zM430 135v2h1v-2zM431 135v2h1v-2zM432 135v2h1v-2zM433 135v2h1v-2zM434 135v2h1v-2zM435 135v2h1v-2zM436 135v2h1v-2zM437 135v2h1v-2zM438 135v2h1v-2zM439 135v2h1v-2zM440 135v4h1v-4zM441 135v4h1v-4zM442 135v6h1v-6zM443 135v6h1v-6zM444 135v6h1v-6zM445 135v6h1v-6zM446 135v6h1v-6zM447 139v2h1v-2zM448 139v2h1v-2zM449 139v2h1v-2zM450 139v2h1v-2zM451 139v2h1v-2zM452 139v2h1v-2zM453 139v2h1v-2zM454 139v4h1v-4zM455 139v4h1v-4zM456 139v4h1v-4zM457 139v4h1v-4zM458 139v4h1v-4zM459 141v2h1v-2zM460 141v2h1v-2zM461 141v2h1v-2zM462 141v4h1v-4zM463 141v4h1v-4zM464 141v4h1v-4zM465 141v4h1v-4zM466 141v4h1v-4zM467 143v38h1v-38zM468 181v45h1v-45zM469 226v52h1v-52zM470 278v61h1v-61zM471 337v16h1v-16zM472 351v2h1v-2zM473 351v4h1v-4zM474 351v6h1v-6zM475 355v2h1v-2zM476 355v2h1v-2zM477 355v2h1v-2zM478 355v4h1v-4zM479 355v4h1v-4zM480 357v2h1v-2zM481 357v2h1v-2zM482 357v2h1v-2zM483 357v4h1v-4zM484 357v4h1v-4zM485 357v4h1v-4zM486 359v2h1v-2zM487 359v2h1v-2zM488 359v2h1v-2zM489 359v2h1v-2zM490 359v4h1v-4zM491 359v4h1v-4zM492 359v6h1v-6zM493 359v6h1v-6zM494 361v4h1v-4zM495 363v2h1v-2zM496 363v2h1v-2zM497 363v2h1v-2zM498 363v4h1v-4zM499 363v4h1v-4zM500 363v4h1v-4zM501 363v4h1v-4zM502 365v4h1v-4zM503 365v4h1v-4zM504 365v4h1v-4zM505 365v4h1v-4zM506 365v4h1v-4zM507 365v4h1v-4zM508 367v2h1v-2zM509 367v2h1v-2zM510 367v2h1v-2zM511 367v2h1v-2zM512 367v2h1v-2zM513 367v4h1v-4zM514 367v6h1v-6zM515 367v6h1v-6zM516 369v4h1v-4zM517 369v4h1v-4zM518 369v4h1v-4zM519 371v2h1v-2zM520 371v2h1v-2zM521 371v2h1v-2zM522 371v2h1v-2zM523 371v4h1v-4zM524 371v4h1v-4zM525 371v4h1v-4zM526 371v4h1v-4zM527 373v2h1v-2zM528 373v2h1v-2zM529 373v2h1v-2zM530 373v4h1v-4zM531 373v4h1v-4zM532 373v4h1v-4zM533 373v4h1v-4zM534 375v2h1v-2zM535 375v2h1v-2zM536 375v2h1v-2zM537 375v4h1v-4zM538 375v2h1v-2zM539 375v2h1v-2zM540 375v2h1v-2zM541 375v2h1v-2zM542 373v4h1v-4zM543 373v4h1v-4zM544 373v4h1v-4zM545 373v4h1v-4zM546 373v4h1v-4zM547 371v6h1v-6zM548 371v6h1v-6zM549 371v4h1v-4zM550 371v4h1v-4zM551 371v4h1v-4zM552 371v4h1v-4zM553 371v4h1v-4zM554 371v2h1v-2zM555 371v2h1v-2zM556 371v2h1v-2zM557 369v4h1v-4zM558 369v4h1v-4zM559 369v4h1v-4zM560 369v4h1v-4zM561 367v4h1v-4zM562 367v4h1v-4zM563 367v4h1v-4zM564 367v4h1v-4zM565 367v4h1v-4zM566 367v2h1v-2zM567 367v2h1v-2zM568 367v2h1v-2zM569 367v2h1v-2zM570 367v2h1v-2zM571 365v4h1v-4zM572 365v4h1v-4zM573 365v4h1v-4zM574 365v2h1v-2zM575 363v4h1v-4zM576 363v4h1v-4zM577 363v4h1v-4zM578 363v4h1v-4zM579 363v4h1v-4zM580 363v2h1v-2zM581 363v2h1v-2zM582 363v2h1v-2zM583 361v4h1v-4zM584 361v4h1v-4zM585 359v6h1v-6zM586 359v6h1v-6zM587 359v6h1v-6zM588 359v4h1v-4zM589 359v2h1v-2zM590 359v2h1v-2zM591 359v2h1v-2zM592 359v2h1v-2zM593 357v4h1v-4zM594 357v4h1v-4zM595 357v4h1v-4zM596 355v6h1v-6zM597 357v2h1v-2zM598 357v2h1v-2zM599 355v4h1v-4zM600 355v4h1v-4zM601 355v4h1v-4zM602 355v2h1v-2zM603 353v4h1v-4zM604 351v6h1v-6zM605 351v4h1v-4zM606 351v2h1v-2zM607 351v2h1v-2zM608 351v2h1v-2zM609 351v2h1v-2zM610 349v4h1v-4zM611 345v6h1v-6zM612 335v14h1v-14zM613 318v18h1v-18zM614 288v30h1v-30zM615 249v39h1v-39zM616 201v48h1v-48zM617 156v45h1v-45zM618 143v14h1v-14zM619 143v4h1v-4zM620 143v2h1v-2zM621 143v2h1v-2zM622 143v2h1v-2zM623 141v4h1v-4zM624 141v4h1v-4zM625 141v4h1v-4zM626 141v4h1v-4zM627 139v4h1v-4zM628 139v4h1v-4zM629 139v4h1v-4zM630 139v2h1v-2zM631 139v2h1v-2zM632 139v2h1v-2zM633 139v2h1v-2zM634 137v4h1v-4zM635 135v6h1v-6zM636 135v6h1v-6zM637 135v6h1v-6zM638 135v6h1v-6zM639 135v6h1v-6zM640 135v4h1v-4zM641 135v2h1v-2zM642 135v2h1v-2zM643 135v2h1v-2zM644 135v2h1v-2zM645 135v2h1v-2zM646 135v2h1v-2zM647 135v2h1v-2zM648 135v2h1v-2zM649 135v2h1v-2zM650 135v2h1v-2zM651 135v2h1v-2zM652 135v2h1v-2zM653 135v2h1v-2zM654 135v4h1v-4zM655 135v4h1v-4zM656 135v6h1v-6zM657 135v6h1v-6zM658 135v6h1v-6zM659 135v6h1v-6zM660 135v6h1v-6zM661 139v2h1v-2zM662 139v2h1v-2zM663 139v2h1v-2zM664 139v2h1v-2zM665 139v2h1v-2zM666 139v2h1v-2zM667 139v4h1v-4zM668 139v4h1v-4zM669 139v4h1v-4zM670 139v4h1v-4zM671 139v4h1v-4zM672 139v4h1v-4zM673 141v2h1v-2zM674 141v2h1v-2zM675 141v4h1v-4zM676 141v4h1v-4zM677 141v4h1v-4zM678 141v4h1v-4zM679 141v4h1v-4zM680 143v24h1v-24zM681 167v42h1v-42zM682 209v49h1v-49zM683 258v57h1v-57zM684 313v40h1v-40zM685 351v2h1v-2zM686 351v4h1v-4zM687 351v6h1v-6zM688 353v4h1v-4zM689 355v2h1v-2zM690 355v2h1v-2zM691 355v4h1v-4zM692 355v4h1v-4zM693 357v2h1v-2zM694 357v2h1v-2zM695 357v2h1v-2zM696 357v4h1v-4zM697 357v4h1v-4zM698 357v4h1v-4zM699 359v2h1v-2zM700 359v2h1v-2zM701 359v2h1v-2zM702 359v2h1v-2zM703 359v4h1v-4zM704 359v4h1v-4zM705 359v6h1v-6zM706 359v6h1v-6zM707 361v4h1v-4zM708 363v2h1v-2zM709 363v2h1v-2zM710 363v2h1v-2zM711 363v4h1v-4zM712 363v4h1v-4zM713 363v4h1v-4zM714 365v2h1v-2zM715 363v6h1v-6zM716 365v4h1v-4zM717 365v4h1v-4zM718 365v4h1v-4zM719 365v4h1v-4zM720 365v4h1v-4zM721 367v2h1v-2zM722 367v2h1v-2zM723 367v2h1v-2zM724 367v2h1v-2zM725 367v2h1v-2zM726 367v4h1v-4zM727 367v6h1v-6zM728 367v6h1v-6zM729 369v4h1v-4zM730 369v4h1v-4zM731 369v4h1v-4zM732 371v2h1v-2zM733 371v2h1v-2zM734 371v2h1v-2zM735 371v2h1v-2zM736 371v4h1v-4zM737 371v4h1v-4zM738 371v4h1v-4zM739 371v4h1v-4zM740 373v2h1v-2zM741 373v2h1v-2zM742 373v2h1v-2zM743 373v4h1v-4zM744 373v4h1v-4zM745 373v4h1v-4zM746 373v4h1v-4zM747 375v2h1v-2zM748 375v2h1v-2zM749 375v2h1v-2zM750 375v2h1v-2zM751 375v4h1v-4zM752 375v2h1v-2zM753 375v2h1v-2zM754 375v2h1v-2zM755 373v4h1v-4zM756 373v4h1v-4zM757 373v4h1v-4zM758 373v4h1v-4zM759 373v4h1v-4zM760 371v6h1v-6zM761 371v6h1v-6zM762 371v4h1v-4zM763 371v4h1v-4zM764 371v4h1v-4zM765 371v4h1v-4zM766 371v4h1v-4zM767 371v2h1v-2zM768 371v2h1v-2zM769 371v2h1v-2zM770 369v4h1v-4zM771 369v4h1v-4zM772 369v4h1v-4zM773 369v4h1v-4zM774 367v6h1v-6zM775 367v4h1v-4zM776 367v4h1v-4zM777 367v4h1v-4z"/>
</svg>
<div class="abs" id="logo" style="left:0;top:0;width:200px;height:40px;white-space:nowrap;line-height:0;will-change:transform;font-family:'Liberation Sans',sans-serif"><span style="display:inline-block;vertical-align:top;width:30px;height:40px;position:relative;left:13.74px;top:-1.23px;line-height:1;font-size:33.62px;color:#e0a010;-webkit-text-stroke:1.9px #e0a010;transform-origin:0 0;transform:scaleX(1.030)">O</span><span style="display:inline-block;vertical-align:top;width:30px;height:40px;position:relative;left:12.43px;top:-9.39px;line-height:1;font-size:44.29px;color:#000;-webkit-text-stroke:1.0px #000;transform-origin:0 0;transform:scaleX(0.938);text-transform:lowercase">W</span><span style="display:inline-block;vertical-align:top;width:30px;height:40px;position:relative;left:14.38px;top:-0.27px;line-height:1;font-size:32.49px;color:#000;-webkit-text-stroke:1.9px #000;transform-origin:0 0;transform:scaleX(1.047)">O</span><span style="display:inline-block;vertical-align:top;width:30px;height:40px;position:relative;left:9.88px;top:-9.03px;line-height:1;font-size:43.86px;color:#000;-webkit-text-stroke:1.0px #000;transform-origin:0 0;transform:scaleX(1.085);text-transform:lowercase">N</span></div>
<div class="abs" style="left:192.5px;top:1px;width:128.5px;height:29.2px;border-radius:10.5px/14.6px;background:#e00000"></div>
<div class="t bk" style="left:224.39px;top:5.91px;font-size:23.60px;letter-spacing:1.85px;-webkit-text-stroke:0.25px #e00000;">Stop</div>
<div class="blk" style="left:401px;top:1px;width:477.8px;height:29.4px;border-radius:10.5px/14.7px"></div>
<div class="abs" style="left:416px;top:14.4px;width:449.6px;height:1.7px;background:#e0e000"></div>
<div class="abs" style="left:470.6px;top:3.6px;width:2.8px;height:26.8px;background:#b8b8b8"></div>
<div class="abs" style="left:470.6px;top:3.6px;width:4.6px;height:1.7px;background:#b8b8b8"></div>
<div class="abs" style="left:470.6px;top:28.0px;width:4.6px;height:1.7px;background:#b8b8b8"></div>
<div class="abs" style="left:806.4px;top:3.6px;width:2.8px;height:26.8px;background:#b8b8b8"></div>
<div class="abs" style="left:804.6px;top:3.6px;width:4.6px;height:1.7px;background:#b8b8b8"></div>
<div class="abs" style="left:804.6px;top:28.0px;width:4.6px;height:1.7px;background:#b8b8b8"></div>
<div class="s" style="left:621.00px;top:2.47px;width:40px;text-align:center;font-weight:bold;font-size:9.60px;color:#f000f0;-webkit-text-stroke:1px #f000f0;transform:scaleX(1.281)">T</div>
<div class="blk" style="left:894.8px;top:1px;width:174.4px;height:29.4px;border-radius:10.5px/14.7px"></div>
<svg class="abs" style="left:0;top:0" width="1280" height="960"><path d="M902.25 6.05H921.75V23.43L912.00 27.75L902.25 23.43Z" fill="#000" stroke="#a020e8" stroke-width="2.5" stroke-linejoin="round"/></svg><div class="s" style="left:892.00px;top:8.43px;width:40px;text-align:center;font-weight:bold;font-size:16.00px;color:#d028f0;transform:scaleX(1.449)">T</div>
<div class="t wht" style="left:926.37px;top:7.31px;font-size:23.60px;letter-spacing:1.86px;">0.000ns</div>
<svg class="abs" style="left:0;top:0" width="1280" height="40"><path d="M1212.2 18.6L1223.6 12.6L1229.6 19.4L1217.6 27.2Z" fill="#1a50d8" stroke="#1a50d8" stroke-width="1.6" stroke-linejoin="round" opacity="0.75"/><path d="M1212.8 18.6L1223.6 13.2L1229 19.3L1217.6 26.4Z" fill="#b4b0c8"/><path d="M1214.6 19.4L1223.2 15L1225.2 17.4L1216.4 22.2Z" fill="#58507c"/><path d="M1216.9 22.8L1225.6 18L1227.6 20.2L1218.4 25.4Z" fill="#d0cce0"/><path d="M1209.3 3.9L1211.3 7L1214.4 8.6L1218.3 5.5L1221.4 5.6Q1223 7 1222.2 8.4L1220.6 10.6L1216.9 12.8L1215.9 16.8L1213.4 15.6L1209.7 13.3L1208.4 9.4Z" fill="#22aa18"/><path d="M1210.4 7.4L1213.8 10.6L1218.6 7.6" fill="none" stroke="#58d040" stroke-width="1.2"/></svg>
<svg class="abs" style="left:0;top:0" width="1280" height="960"><path d="M631.65 33.25H651.75V50.48L641.70 54.75L631.65 50.48Z" fill="#000" stroke="#a020e8" stroke-width="2.5" stroke-linejoin="round"/></svg><div class="s" style="left:621.70px;top:35.52px;width:40px;text-align:center;font-weight:bold;font-size:16.40px;color:#d028f0;transform:scaleX(1.452)">T</div>
<svg class="abs" style="left:0;top:0" width="1280" height="960"><path d="M-2 419.2H23.2L29.8 431.2L23.2 444.8H-2Z" fill="#000" stroke="#e00000" stroke-width="2.0" stroke-linejoin="miter"/><path d="M1248.6 431.2L1270 421.6V441.2Z" fill="#a020e0"/></svg>
<span class="s" style="left:6.00px;top:417.84px;width:13.90px;height:30px;line-height:30px;font-size:25.00px;color:#e00000;-webkit-text-stroke:1.20px #e00000;clip-path:polygon(-2px 0,110% 0,110% 19.89px,9.50px 19.89px,9.50px 100%,5.29px 100%,5.29px 19.89px,-2px 19.89px)">1</span>
<div class="abs" style="left:0;top:830.4px;width:525px;height:1.8px;background:#2c6466"></div>
<div class="abs" style="left:0;top:830.4px;width:1.8px;height:129.6px;background:#66b3b5"></div>
<div class="abs" style="left:334.2px;top:830.4px;width:3.6px;height:66px;background:#66b3b5"></div>
<div class="abs" style="left:0;top:893.9px;width:509.4px;height:3.8px;background:#66b3b5"></div>
<div class="abs" style="left:506.8px;top:830.4px;width:3.2px;height:129.6px;background:#66b3b5"></div>
<div class="abs" style="left:0;top:955.4px;width:509.4px;height:4.6px;background:#66b3b5"></div>
<div class="abs" style="left:1.8px;top:861.6px;width:332.4px;height:3px;background:#005c8c"></div>
<div class="abs" style="left:525px;top:830.2px;width:755px;height:1.6px;background:#1060c8"></div>
<div class="abs" style="left:510px;top:860.8px;width:768.2px;height:96.6px;background:#0060a0"></div>
<div class="abs" style="left:510px;top:860.6px;width:768.2px;height:3px;background:#0068b0"></div>
<div class="blk" style="left:1.8px;top:832px;width:331.6px;height:30.4px;border-radius:5.5px"></div>
<div class="blk" style="left:1.8px;top:863.8px;width:331.6px;height:30.1px;border-radius:5.5px"></div>
<div class="blk" style="left:338px;top:831.6px;width:169px;height:62.3px;border-radius:7px"></div>
<div class="blk" style="left:1.8px;top:897.7px;width:505.2px;height:57.7px;border-radius:5.5px"></div>
<div class="abs" style="left:4.10px;top:835.70px;width:25.4px;height:25.4px;border-radius:50%;background:#e00000"></div><span class="s" style="left:9.82px;top:834.34px;width:12.57px;height:28px;line-height:28px;font-size:22.60px;color:#000;-webkit-text-stroke:0.60px #000;clip-path:polygon(-2px 0,110% 0,110% 18.54px,8.38px 18.54px,8.38px 100%,4.98px 100%,4.98px 18.54px,-2px 18.54px)">1</span>
<div class="t red" style="left:29.69px;top:839.11px;font-size:23.60px;letter-spacing:1.94px;">1V-</div>
<div class="t red" style="left:169.37px;top:839.11px;font-size:23.60px;letter-spacing:1.78px;">0.00div</div>
<div class="abs" style="left:4.10px;top:867.20px;width:25.4px;height:25.4px;border-radius:50%;background:#e0e000"></div><span class="s" style="left:10.32px;top:868.54px;font-size:22.60px;color:#000;-webkit-text-stroke:0.6px #000">2</span>
<div class="t yel" style="left:28.52px;top:871.11px;font-size:23.60px;letter-spacing:1.32px;">5V~</div>
<div class="t yel" style="left:169.37px;top:871.11px;font-size:23.60px;letter-spacing:1.78px;">0.00div</div>
<div class="t red" style="left:366.26px;top:836.31px;font-size:23.60px;letter-spacing:1.98px;">(5MS/s)</div>
<div class="t red" style="left:347.73px;top:867.91px;font-size:23.60px;letter-spacing:2.04px;">Depth:10K</div>
<div class="abs" style="left:2.70px;top:899.80px;width:25.4px;height:25.4px;border-radius:50%;background:#e00000"></div><span class="s" style="left:8.42px;top:898.44px;width:12.57px;height:28px;line-height:28px;font-size:22.60px;color:#000;-webkit-text-stroke:0.60px #000;clip-path:polygon(-2px 0,110% 0,110% 18.54px,8.38px 18.54px,8.38px 100%,4.98px 100%,4.98px 18.54px,-2px 18.54px)">1</span>
<div class="t red" style="left:34.28px;top:901.81px;font-size:23.60px;letter-spacing:1.88px;">V:-591.6mv</div>
<div class="abs" style="left:2.70px;top:929.90px;width:25.4px;height:25.4px;border-radius:50%;background:#e0e000"></div><span class="s" style="left:8.92px;top:931.24px;font-size:22.60px;color:#000;-webkit-text-stroke:0.6px #000">2</span>
<div class="t yel" style="left:34.28px;top:931.71px;font-size:23.60px;letter-spacing:1.84px;">V:OFF</div>
<div class="abs" style="left:256.70px;top:899.80px;width:25.4px;height:25.4px;border-radius:50%;background:#e00000"></div><span class="s" style="left:262.42px;top:898.44px;width:12.57px;height:28px;line-height:28px;font-size:22.60px;color:#000;-webkit-text-stroke:0.60px #000;clip-path:polygon(-2px 0,110% 0,110% 18.54px,8.38px 18.54px,8.38px 100%,4.98px 100%,4.98px 18.54px,-2px 18.54px)">1</span>
<div class="t red" style="left:289.68px;top:901.81px;font-size:23.60px;letter-spacing:1.96px;">Vp:4.880v</div>
<div class="abs" style="left:256.70px;top:929.90px;width:25.4px;height:25.4px;border-radius:50%;background:#e0e000"></div><span class="s" style="left:262.92px;top:931.24px;font-size:22.60px;color:#000;-webkit-text-stroke:0.6px #000">2</span>
<div class="t yel" style="left:289.68px;top:931.71px;font-size:23.60px;letter-spacing:1.88px;">Vp:OFF</div>
<div class="blk" style="left:510.4px;top:831.8px;width:158.8px;height:28.8px;border-radius:10.5px/14.4px"></div>
<div class="t wht" style="left:530.91px;top:835.71px;font-size:23.60px;letter-spacing:2.45px;">M:100us</div>
<div class="btn" style="left:515.6px;top:865px;width:144px;height:89.6px"></div>
<div class="t bk" style="left:552.52px;top:881.21px;font-size:23.60px;letter-spacing:2.56px;-webkit-text-stroke:0.25px #0080e0;">Type</div>
<div class="abs" style="left:545.6px;top:913.8px;width:80px;height:31.4px;background:#e0e0e0"></div>
<div class="t bk" style="left:546.07px;top:918.61px;font-size:23.60px;letter-spacing:2.09px;-webkit-text-stroke:0.25px #e0e0e0;">Image</div>
<div class="btn" style="left:955.8px;top:865.4px;width:143px;height:89.2px"></div>
<div class="t bk" style="left:993.69px;top:899.81px;font-size:23.60px;letter-spacing:2.07px;-webkit-text-stroke:0.25px #0080e0;">Save</div>
<div class="blk" style="left:1063.4px;top:831.8px;width:206.6px;height:28.6px;border-radius:10.5px/14.3px"></div>
<div class="abs" style="left:1067.60px;top:832.70px;width:25.4px;height:25.4px;border-radius:50%;background:#e00000"></div><span class="s" style="left:1073.32px;top:831.34px;width:12.57px;height:28px;line-height:28px;font-size:22.60px;color:#000;-webkit-text-stroke:0.60px #000;clip-path:polygon(-2px 0,110% 0,110% 18.54px,8.38px 18.54px,8.38px 100%,4.98px 100%,4.98px 18.54px,-2px 18.54px)">1</span>
<svg class="abs" style="left:0;top:0" width="1280" height="960"><path d="M1096.6 856.6H1110L1117.4 835.6H1127.6" fill="none" stroke="#f8f8f8" stroke-width="1.8"/></svg>
<div class="t wht" style="left:1130.97px;top:836.91px;font-size:23.60px;letter-spacing:1.58px;">0.00mV</div>
</body>
</html>
